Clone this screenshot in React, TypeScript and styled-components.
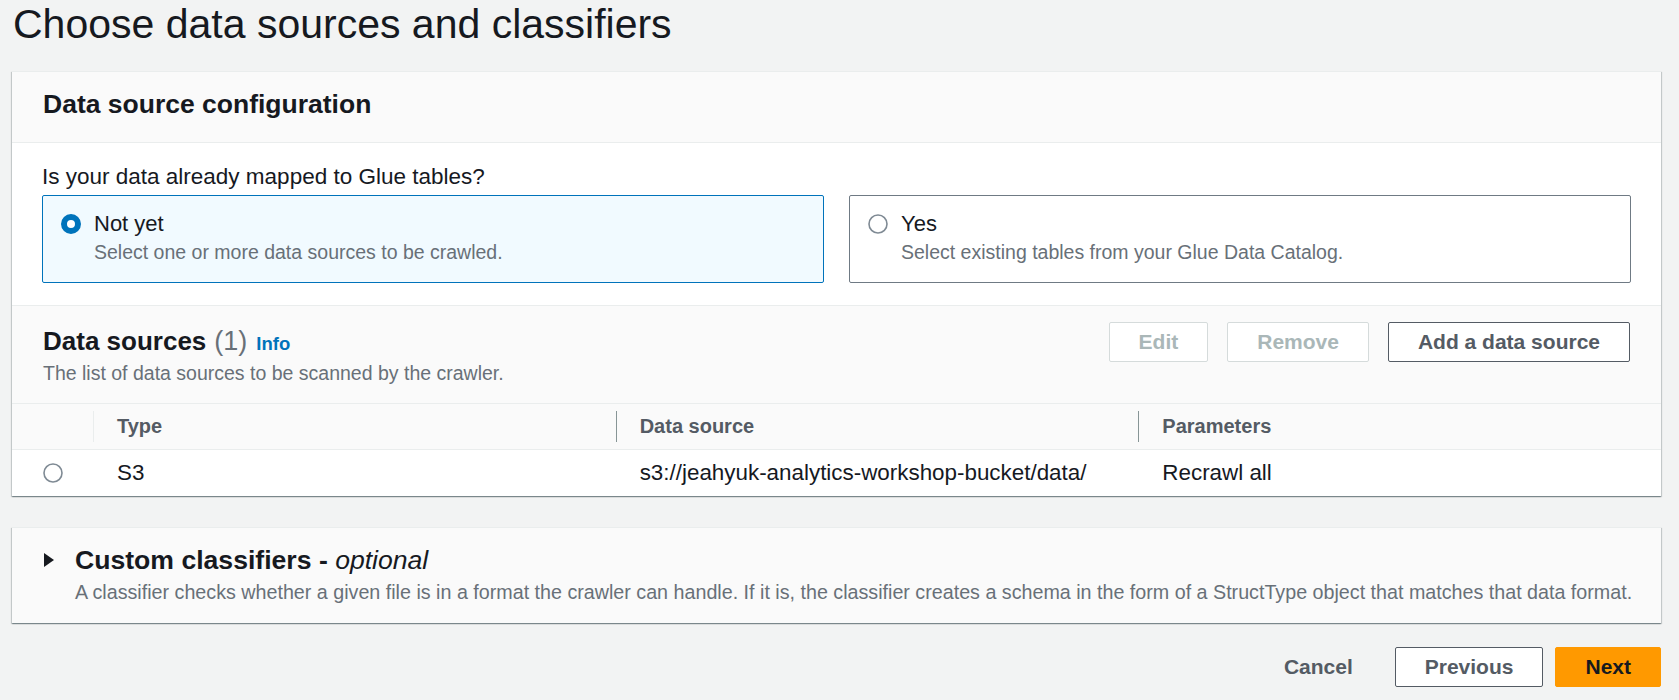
import React from 'react';
import styled, { createGlobalStyle } from 'styled-components';

const GlobalStyle = createGlobalStyle`
  html, body { margin: 0; padding: 0; background: #f2f3f3; }
  body {
    font-family: "Liberation Sans", Arial, sans-serif;
    color: #16191f;
    -webkit-font-smoothing: antialiased;
  }
  * { box-sizing: border-box; }
`;

const Page = styled.div`
  display: flex;
  flex-direction: column;
  padding: 0 18px 0 12px;
`;

const Title = styled.h1`
  margin: 0 0 23px 1px;
  font-size: 41px;
  line-height: 48px;
  font-weight: 400;
  color: #16191f;
`;

const Panel = styled.section<{ $muted?: boolean; $gap?: number }>`
  background: ${(p) => (p.$muted ? '#fafafa' : '#ffffff')};
  border-top: 1px solid #eaeded;
  margin-top: ${(p) => p.$gap ?? 0}px;
  box-shadow: 0 1px 1px 0 rgba(0, 28, 36, 0.3), 1px 1px 1px 0 rgba(0, 28, 36, 0.15),
    -1px 1px 1px 0 rgba(0, 28, 36, 0.15);
`;

const PanelHeader = styled.div`
  background: #fafafa;
  padding: 16px 31px 22px;
  border-bottom: 1px solid #eaeded;
`;

const H2 = styled.h2`
  margin: 0;
  font-size: 26.5px;
  line-height: 32px;
  font-weight: 700;
  color: #16191f;
`;

const ConfigBody = styled.div`
  padding: 19px 30px 22px;
`;

const FieldLabel = styled.div`
  font-size: 22.5px;
  line-height: 30px;
  color: #16191f;
`;

const Tiles = styled.div`
  display: grid;
  grid-template-columns: 1fr 1fr;
  gap: 25px;
  margin-top: 3px;
`;

const Tile = styled.label<{ $checked?: boolean }>`
  display: grid;
  grid-template-columns: 20px 1fr;
  column-gap: 13px;
  padding: 13px 18px 17px;
  border: 1px solid ${(p) => (p.$checked ? '#0073bb' : '#6f7a84')};
  background: ${(p) => (p.$checked ? '#f1faff' : '#ffffff')};
  border-radius: 2px;
`;

const RadioBox = styled.span`
  display: flex;
  align-items: center;
  height: 30px;
`;

const TileLabel = styled.div`
  font-size: 22px;
  line-height: 30px;
  color: #16191f;
`;

const Description = styled.div<{ $span?: boolean }>`
  grid-column: ${(p) => (p.$span ? '2' : 'auto')};
  font-size: 19.5px;
  line-height: 26px;
  color: #687078;
`;

const SectionHeader = styled.div`
  display: flex;
  justify-content: space-between;
  align-items: flex-start;
  background: #fafafa;
  border-top: 1px solid #eaeded;
  padding: 16px 31px 17px;
`;

const HeadingBlock = styled.div`
  margin-top: 2px;
  display: flex;
  flex-direction: column;
  gap: 2px;
`;

const HeadingLine = styled.div`
  display: flex;
  align-items: baseline;
  height: 34px;
  line-height: 34px;
`;

const H2Inline = styled.h2`
  margin: 0;
  font-size: 26px;
  font-weight: 700;
  color: #16191f;
`;

const Counter = styled.span`
  font-size: 27px;
  font-weight: 400;
  color: #687078;
  margin-left: 8px;
`;

const InfoLink = styled.a`
  font-size: 18.5px;
  font-weight: 700;
  color: #0073bb;
  margin-left: 9px;
  text-decoration: none;
`;

const Actions = styled.div`
  display: flex;
  align-items: center;
  gap: 19px;
`;

const Button = styled.button<{ $variant?: 'normal' | 'disabled' | 'primary' | 'link' }>`
  height: 40px;
  padding: 0 29px;
  border-radius: 2px;
  font-family: inherit;
  font-size: 21px;
  font-weight: 700;
  line-height: 38px;
  cursor: pointer;
  border: 1px solid
    ${(p) =>
      p.$variant === 'disabled'
        ? '#d5dbdb'
        : p.$variant === 'primary'
        ? '#ff9900'
        : p.$variant === 'link'
        ? 'transparent'
        : '#545b64'};
  background: ${(p) =>
    p.$variant === 'primary' ? '#ff9900' : p.$variant === 'link' ? 'transparent' : '#ffffff'};
  color: ${(p) =>
    p.$variant === 'disabled' ? '#aab7b8' : p.$variant === 'primary' ? '#16191f' : '#545b64'};
`;

const TableGrid = styled.div`
  display: grid;
  grid-template-columns: 81px repeat(3, 1fr);
`;

const HeadCell = styled.div<{ $divider?: 'none' | 'light' | 'dark' }>`
  position: relative;
  height: 47px;
  display: flex;
  align-items: center;
  padding-left: 24px;
  background: #fafafa;
  border-top: 1px solid #eaeded;
  border-bottom: 1px solid #eaeded;
  font-size: 20px;
  font-weight: 700;
  color: #545b64;
  &::before {
    content: '';
    display: ${(p) => (p.$divider === 'none' || !p.$divider ? 'none' : 'block')};
    position: absolute;
    left: 0;
    top: 7px;
    bottom: 7px;
    width: 1px;
    background: ${(p) => (p.$divider === 'light' ? '#eaeded' : '#879596')};
  }
`;

const BodyCell = styled.div<{ $center?: boolean }>`
  height: 46px;
  display: flex;
  align-items: center;
  justify-content: ${(p) => (p.$center ? 'center' : 'flex-start')};
  padding-left: ${(p) => (p.$center ? '0' : '24px')};
  font-size: 22.4px;
  color: #16191f;
  white-space: nowrap;
`;

const Classifiers = styled.div`
  display: grid;
  grid-template-columns: 32px 1fr;
  padding: 16px 31px 18px;
  row-gap: 3px;
`;

const CaretBox = styled.span`
  display: flex;
  align-items: center;
  height: 32px;
  padding-left: 1px;
`;

const ClassifierTitle = styled.h2`
  margin: 0;
  font-size: 26.6px;
  line-height: 32px;
  font-weight: 700;
  color: #16191f;
  em {
    font-weight: 400;
  }
`;

const ClassifierText = styled(Description)`
  font-size: 19.7px;
  white-space: nowrap;
`;

const Footer = styled.div`
  display: flex;
  justify-content: flex-end;
  align-items: center;
  gap: 12px;
  margin-top: 24px;
`;

const Radio = ({ checked }: { checked?: boolean }) =>
  checked ? (
    <svg width="20" height="20" viewBox="0 0 20 20">
      <circle cx="10" cy="10" r="7" fill="#ffffff" stroke="#0073bb" strokeWidth="6" />
    </svg>
  ) : (
    <svg width="20" height="20" viewBox="0 0 20 20">
      <circle cx="10" cy="10" r="9" fill="#ffffff" stroke="#7f8a94" strokeWidth="1.6" />
    </svg>
  );

const Caret = () => (
  <svg width="10" height="14" viewBox="0 0 10 14">
    <polygon points="0,0 10,7 0,14" fill="#16191f" />
  </svg>
);

export default function App() {
  return (
    <>
      <GlobalStyle />
      <Page>
        <Title>Choose data sources and classifiers</Title>
        <Panel>
          <PanelHeader>
            <H2>Data source configuration</H2>
          </PanelHeader>
          <ConfigBody>
            <FieldLabel>Is your data already mapped to Glue tables?</FieldLabel>
            <Tiles>
              <Tile $checked>
                <RadioBox>
                  <Radio checked />
                </RadioBox>
                <TileLabel>Not yet</TileLabel>
                <Description $span>Select one or more data sources to be crawled.</Description>
              </Tile>
              <Tile>
                <RadioBox>
                  <Radio />
                </RadioBox>
                <TileLabel>Yes</TileLabel>
                <Description $span>Select existing tables from your Glue Data Catalog.</Description>
              </Tile>
            </Tiles>
          </ConfigBody>
          <SectionHeader>
            <HeadingBlock>
              <HeadingLine>
                <H2Inline>Data sources</H2Inline>
                <Counter>(1)</Counter>
                <InfoLink href="#">Info</InfoLink>
              </HeadingLine>
              <Description>The list of data sources to be scanned by the crawler.</Description>
            </HeadingBlock>
            <Actions>
              <Button $variant="disabled">Edit</Button>
              <Button $variant="disabled">Remove</Button>
              <Button $variant="normal">Add a data source</Button>
            </Actions>
          </SectionHeader>
          <TableGrid>
            <HeadCell $divider="none" />
            <HeadCell $divider="light">Type</HeadCell>
            <HeadCell $divider="dark">Data source</HeadCell>
            <HeadCell $divider="dark">Parameters</HeadCell>
            <BodyCell $center>
              <Radio />
            </BodyCell>
            <BodyCell>S3</BodyCell>
            <BodyCell>s3://jeahyuk-analytics-workshop-bucket/data/</BodyCell>
            <BodyCell>Recrawl all</BodyCell>
          </TableGrid>
        </Panel>
        <Panel $muted $gap={31}>
          <Classifiers>
            <CaretBox>
              <Caret />
            </CaretBox>
            <ClassifierTitle>
              Custom classifiers - <em>optional</em>
            </ClassifierTitle>
            <ClassifierText $span>
              A classifier checks whether a given file is in a format the crawler can handle. If it is, the
              classifier creates a schema in the form of a StructType object that matches that data format.
            </ClassifierText>
          </Classifiers>
        </Panel>
        <Footer>
          <Button $variant="link">Cancel</Button>
          <Button $variant="normal">Previous</Button>
          <Button $variant="primary">Next</Button>
        </Footer>
      </Page>
    </>
  );
}
